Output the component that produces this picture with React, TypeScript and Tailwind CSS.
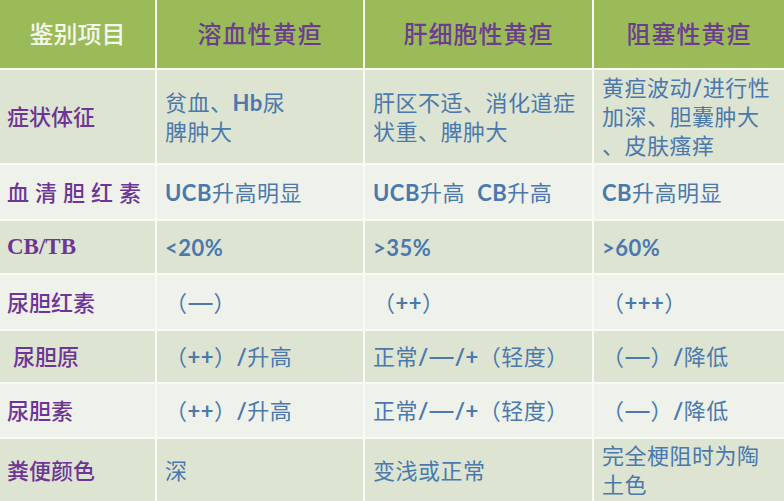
import React from "react"

const CJK = "font-['Lato','Noto_Sans_CJK_SC',sans-serif]"

type Row = {
  label: React.ReactNode
  h: string
  bg: string
  cells: string[][]
}

const DARK = "bg-[#dde5d2]"
const LIGHT = "bg-[#eef2ea]"

// latin runs bold like the slide, the long dash stretched a bit
function Txt({ s }: { s: string }) {
  const parts = s.split(/([A-Za-z0-9<>%+/]+|—)/)
  return (
    <>
      {parts.map((p, i) => {
        if (p === "—")
          return (
            <span key={i} className="inline-block font-bold scale-x-[1.6] mx-[4px]">
              {p}
            </span>
          )
        if (/^[A-Za-z0-9<>%+/]+$/.test(p))
          return (
            <span key={i} className="font-bold">
              {p}
            </span>
          )
        return <span key={i}>{p}</span>
      })}
    </>
  )
}

const rows: Row[] = [
  {
    label: "症状体征",
    h: "h-[93px]",
    bg: DARK,
    cells: [["贫血、Hb尿", "脾肿大"], ["肝区不适、消化道症", "状重、脾肿大"], ["黄疸波动/进行性", "加深、胆囊肿大", "、皮肤瘙痒"]],
  },
  {
    label: <span className="tracking-[6px]">血清胆红素</span>,
    h: "h-[54px]",
    bg: LIGHT,
    cells: [["UCB升高明显"], ["UCB升高  CB升高"], ["CB升高明显"]],
  },
  {
    label: <span className="font-['Liberation_Serif',serif] font-bold text-[23px]">CB/TB</span>,
    h: "h-[52px]",
    bg: DARK,
    cells: [["<20%"], [">35%"], [">60%"]],
  },
  {
    label: "尿胆红素",
    h: "h-[54px]",
    bg: LIGHT,
    cells: [["（—）"], ["（++）"], ["（+++）"]],
  },
  {
    label: <span className="pl-[6px]">尿胆原</span>,
    h: "h-[51px]",
    bg: DARK,
    cells: [["（++）/升高"], ["正常/—/+（轻度）"], ["（—）/降低"]],
  },
  {
    label: "尿胆素",
    h: "h-[53px]",
    bg: LIGHT,
    cells: [["（++）/升高"], ["正常/—/+（轻度）"], ["（—）/降低"]],
  },
  {
    label: "粪便颜色",
    h: "h-[62px]",
    bg: DARK,
    cells: [["深"], ["变浅或正常"], ["完全梗阻时为陶", "土色"]],
  },
]

export default function App() {
  return (
    <div className={`w-[784px] h-[501px] overflow-hidden bg-[#f8faf4] ${CJK}`}>
      <div className="grid grid-cols-[155px_206px_227px_1fr] gap-[2px]">
        {/* header */}
        <div className="h-[68px] bg-[#9bbb59] flex items-center justify-center text-[24px] text-[#f4f7ec] font-medium">
          鉴别项目
        </div>
        {["溶血性黄疸", "肝细胞性黄疸", "阻塞性黄疸"].map((t) => (
          <div
            key={t}
            className="h-[68px] bg-[#9bbb59] flex items-center justify-center text-[24px] text-[#6b3d8f] font-medium tracking-[1px]"
          >
            {t}
          </div>
        ))}

        {rows.map((r, i) => (
          <React.Fragment key={i}>
            <div className={`${r.h} ${r.bg} flex items-center pl-[7px] text-[22px] text-[#6e3596] font-medium`}>
              {r.label}
            </div>
            {r.cells.map((lines, j) => (
              <div
                key={j}
                className={`${r.h} ${r.bg} flex flex-col justify-center pl-[8px] text-[22px] leading-[29px] tracking-[0.5px] text-[#4b78ad] whitespace-pre`}
              >
                {lines.map((l, k) => (
                  <div key={k}>
                    <Txt s={l} />
                  </div>
                ))}
              </div>
            ))}
          </React.Fragment>
        ))}
      </div>
    </div>
  )
}
